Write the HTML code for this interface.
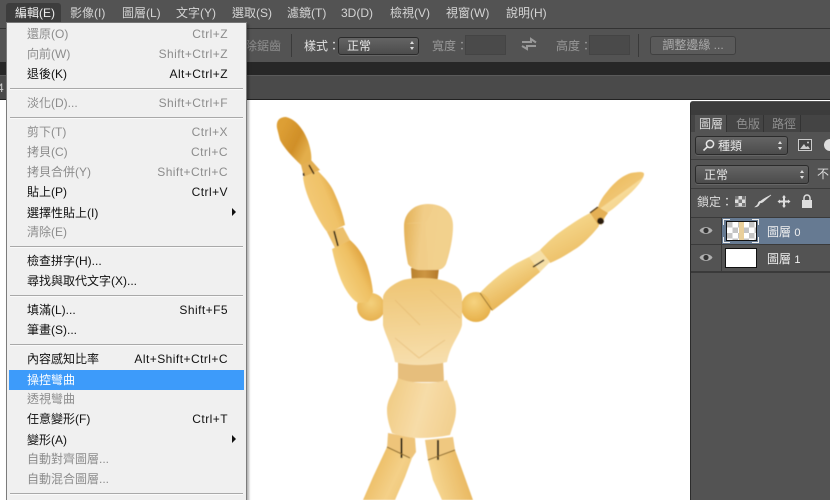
<!DOCTYPE html>
<html><head><meta charset="utf-8">
<style>
html,body{margin:0;padding:0;width:830px;height:500px;overflow:hidden;background:#fff}
body{position:relative;font:12px "Liberation Sans","Noto Sans CJK TC",sans-serif}
.a{position:absolute}
.t{position:absolute;white-space:nowrap;line-height:16px}
.bar{color:#d4d4d4}
.sep{position:absolute;left:10px;width:233px;background:#a9a9a9;border-bottom:1px solid #fafafa;box-sizing:border-box;height:2px}
.m{position:absolute;left:9px;width:235px;height:20px;line-height:20px;color:#111}
.m b{font-weight:normal;position:absolute;left:18px;top:0;white-space:nowrap}
.m i{font-style:normal;position:absolute;right:16px;top:0;white-space:nowrap;letter-spacing:.45px}
.d{color:#8c8c8c}
.arr{position:absolute;left:232px;width:0;height:0;border-left:4px solid #111;border-top:4px solid transparent;border-bottom:4px solid transparent}
.sel{position:absolute;box-sizing:border-box;border:1px solid #2b2b2b;border-radius:3px;background:linear-gradient(#646464,#4c4c4c);box-shadow:0 1px 0 #666;color:#e6e6e6;line-height:16px}
.ud{position:absolute;width:5px;height:9px}
.ud:before{content:"";position:absolute;left:0;top:0;border-left:2.5px solid transparent;border-right:2.5px solid transparent;border-bottom:3.5px solid #ddd}
.ud:after{content:"";position:absolute;left:0;bottom:0;border-left:2.5px solid transparent;border-right:2.5px solid transparent;border-top:3.5px solid #ddd}
</style></head><body>
<div class="a" style="left:0;top:0;width:830px;height:28px;background:#535353;border-bottom:1px solid #333"></div>
<div class="a" style="left:6px;top:3px;width:55px;height:20px;background:#3d3d3d;border-radius:3px 3px 0 0"></div>
<div class="bar">
<span class="t" style="left:15px;top:5px;color:#eee">編輯(E)</span>
<span class="t" style="left:70px;top:5px">影像(I)</span>
<span class="t" style="left:122px;top:5px">圖層(L)</span>
<span class="t" style="left:176px;top:5px">文字(Y)</span>
<span class="t" style="left:232px;top:5px">選取(S)</span>
<span class="t" style="left:287px;top:5px">濾鏡(T)</span>
<span class="t" style="left:341px;top:5px">3D(D)</span>
<span class="t" style="left:390px;top:5px">檢視(V)</span>
<span class="t" style="left:446px;top:5px">視窗(W)</span>
<span class="t" style="left:506px;top:5px">說明(H)</span>
</div>
<div class="a" style="left:0;top:29px;width:830px;height:33px;background:#535353"></div>
<div class="a" style="left:0;top:62px;width:830px;height:13px;background:#272727"></div>
<div class="a" style="left:0;top:75px;width:830px;height:24px;background:#4a4a4a;border-top:1px solid #5a5a5a;box-sizing:border-box"></div>
<div class="a" style="left:0;top:99px;width:830px;height:1px;background:#222"></div>
<span class="t" style="left:-3px;top:80px;color:#ccc">4</span>

<span class="t" style="left:245px;top:38px;color:#8d8d8d">除鋸齒</span>
<div class="a" style="left:291px;top:34px;width:1px;height:23px;background:#3a3a3a"></div>
<span class="t" style="left:304px;top:38px;color:#e2e2e2">樣式：</span>
<div class="sel" style="left:338px;top:37px;width:81px;height:18px"><span class="t" style="left:8px;top:0">正常</span><span class="ud" style="left:71px;top:3px"></span></div>
<span class="t" style="left:432px;top:38px;color:#999">寬度：</span>
<div class="a" style="left:465px;top:35px;width:41px;height:20px;background:#4a4a4a;border:1px solid #444;box-sizing:border-box"></div>
<svg class="a" style="left:521px;top:37px" width="16" height="15"><path d="M1 5h9V2l5 3.5M15 9H6v3L1 9" fill="none" stroke="#999" stroke-width="2"/></svg>
<span class="t" style="left:556px;top:38px;color:#999">高度：</span>
<div class="a" style="left:589px;top:35px;width:41px;height:20px;background:#4a4a4a;border:1px solid #444;box-sizing:border-box"></div>
<div class="a" style="left:638px;top:34px;width:1px;height:23px;background:#3a3a3a"></div>
<div class="a" style="left:650px;top:36px;width:86px;height:19px;box-sizing:border-box;border:1px solid #404040;border-radius:3px;background:#5a5a5a;color:#aaa;line-height:17px;text-align:center">調整邊緣 ...</div>

<svg class="a" style="left:250px;top:100px" width="440" height="400" viewBox="250 100 440 400">
<defs>
<filter id="b" x="-5%" y="-5%" width="110%" height="110%"><feGaussianBlur stdDeviation="0.45"/></filter>
<linearGradient id="h1" gradientUnits="userSpaceOnUse" x1="280" y1="130" x2="310" y2="145"><stop offset="0" stop-color="#dd9f35"/><stop offset=".6" stop-color="#d08f28"/><stop offset="1" stop-color="#e3ae4b"/></linearGradient>
<linearGradient id="a1" gradientUnits="userSpaceOnUse" x1="308" y1="205" x2="340" y2="192"><stop offset="0" stop-color="#f3c976"/><stop offset=".6" stop-color="#f0c268"/><stop offset="1" stop-color="#dfa540"/></linearGradient>
<linearGradient id="a2" gradientUnits="userSpaceOnUse" x1="338" y1="278" x2="368" y2="262"><stop offset="0" stop-color="#f5d180"/><stop offset=".6" stop-color="#efc063"/><stop offset="1" stop-color="#dfa23d"/></linearGradient>
<linearGradient id="hd" gradientUnits="userSpaceOnUse" x1="404" y1="235" x2="453" y2="240"><stop offset="0" stop-color="#e4b35a"/><stop offset=".35" stop-color="#f1cd88"/><stop offset="1" stop-color="#f3d08c"/></linearGradient>
<linearGradient id="ch" gradientUnits="userSpaceOnUse" x1="420" y1="280" x2="425" y2="365"><stop offset="0" stop-color="#efc676"/><stop offset=".5" stop-color="#f3d291"/><stop offset="1" stop-color="#f7dfae"/></linearGradient>
<linearGradient id="pv" gradientUnits="userSpaceOnUse" x1="387" y1="400" x2="455" y2="420"><stop offset="0" stop-color="#f1cc85"/><stop offset=".5" stop-color="#f7dca8"/><stop offset="1" stop-color="#f2cf8e"/></linearGradient>
<linearGradient id="ra" gradientUnits="userSpaceOnUse" x1="505" y1="268" x2="520" y2="295"><stop offset="0" stop-color="#f6d88f"/><stop offset="1" stop-color="#e8b658"/></linearGradient>
<linearGradient id="rf" gradientUnits="userSpaceOnUse" x1="560" y1="225" x2="575" y2="255"><stop offset="0" stop-color="#f5d68a"/><stop offset="1" stop-color="#edc068"/></linearGradient>
<linearGradient id="rh" gradientUnits="userSpaceOnUse" x1="615" y1="182" x2="628" y2="200"><stop offset="0" stop-color="#eebf65"/><stop offset=".55" stop-color="#f0c572"/><stop offset=".6" stop-color="#f7da98"/><stop offset="1" stop-color="#f6d68f"/></linearGradient>
<linearGradient id="lg" gradientUnits="userSpaceOnUse" x1="368" y1="470" x2="410" y2="490"><stop offset="0" stop-color="#ecbb60"/><stop offset=".6" stop-color="#f4d088"/><stop offset="1" stop-color="#efc575"/></linearGradient>
<linearGradient id="lh" gradientUnits="userSpaceOnUse" x1="435" y1="480" x2="470" y2="470"><stop offset="0" stop-color="#f5d48e"/><stop offset="1" stop-color="#e7b45a"/></linearGradient>
<linearGradient id="nk" gradientUnits="userSpaceOnUse" x1="411" y1="278" x2="438" y2="278"><stop offset="0" stop-color="#b8802c"/><stop offset=".5" stop-color="#cd9644"/><stop offset="1" stop-color="#b57a2a"/></linearGradient>
<radialGradient id="bl" gradientUnits="userSpaceOnUse" cx="371" cy="303" r="20"><stop offset="0" stop-color="#f4d07c"/><stop offset="1" stop-color="#e5ae4c"/></radialGradient>
<radialGradient id="br" gradientUnits="userSpaceOnUse" cx="474" cy="302" r="20"><stop offset="0" stop-color="#f6d380"/><stop offset="1" stop-color="#e6b04a"/></radialGradient>
</defs>
<g filter="url(#b)">
<!-- left arm -->
<path d="M277 128C276 120 280 117 286 117C295 119 303 128 308 141C311 150 312 157 311 163L306 170L301 165C296 160 285 150 280 140Z" fill="url(#h1)"/>
<path d="M301 165L311 160L320 170L304 177Z" fill="#e3af52"/>
<path d="M303 177L318 171C325 178 330 184 333 190C339 203 343 214 345 225L328 233C322 226 316 215 311 204C307 195 304 186 303 177Z" fill="url(#a1)"/>
<path d="M327 232L343 227L350 240L335 248Z" fill="#ecc06c"/>
<circle cx="371" cy="307" r="14" fill="url(#bl)"/>
<path d="M332 249L350 240C358 247 363 255 367 265C370 274 372 283 373 292L368 302L358 303C350 298 345 289 341 280C337 270 334 259 332 249Z" fill="url(#a2)"/>
<path d="M309 165L314 174M303.500 173L304 176" stroke="#2c1b0c" stroke-width="1.5" fill="none"/>
<path d="M334 231L338 246" stroke="#1f140a" stroke-width="1.6"/>
<!-- right arm -->
<path d="M598 207C601 198 606 193 610 188C617 180 624 175 631 173C637 172 644 171 644 174C644 179 636 189 624 199C618 205 612 210 607 213L601 226Z" fill="url(#rh)"/>
<path d="M590 213L598 207L608 213L598 226Z" fill="#e4b055"/>
<path d="M540 250C547 243 553 237 560 232C570 225 580 218 590 213L599 226C592 235 584 243 577 248C569 253 560 259 550 263Z" fill="url(#rf)"/>
<path d="M529 257L540 250L550 262L539 273Z" fill="#f6dfa6"/>
<path d="M480 293C490 282 505 270 517 263L529 257L540 272C528 282 512 296 492 311Z" fill="url(#ra)"/>
<path d="M533 267L544 260" stroke="#1f140a" stroke-width="1.4"/>
<path d="M590 213L598 207" stroke="#4a2e10" stroke-width="1.4"/>
<circle cx="600.500" cy="221" r="3.400" fill="#2c1b10"/>
<circle cx="476" cy="307" r="15" fill="url(#br)"/>
<path d="M480 293L492 310" stroke="#94702e" stroke-width="1"/>
<!-- neck and head -->
<path d="M411 268H439L437 284C430 287 418 287 412 284Z" fill="url(#nk)"/>
<path d="M428 204C413 204 404 214 404 226C404 240 406 254 408 264C412 269 416 270 420 270H436C441 270 444 268 446 264C449 255 453 240 453 226C453 212 443 204 428 204Z" fill="url(#hd)"/>
<path d="M405 224C412 222 420 222 425 223C429 218 432 212 433 205C444 208 451 215 453 226C449 240 447 255 445 266C438 269 428 270 428 270C428 255 426 240 425 223Z" fill="#f4d492" opacity=".35"/>
<!-- legs -->
<path d="M387 447L412 458L405 477L395 500H363L373 477Z" fill="url(#lg)"/>
<path d="M428 460L455 450L464 475L473 500H442L433 480Z" fill="url(#lh)"/>
<path d="M388 433L415 438L416 452L412 458L387 448Z" fill="#eec47a"/>
<path d="M425 440L453 437L455 450L428 460Z" fill="#efc880"/>
<path d="M401.500 438V458M438 440V460" stroke="#1f140a" stroke-width="2"/>
<path d="M387 447L410 458M428 460L455 450" stroke="#8c6a2a" stroke-width="1" fill="none"/>
<!-- waist and pelvis -->
<path d="M398 360H443L444 382H398Z" fill="#e6be7c"/>
<path d="M398 378C410 384 435 384 447 380C450 390 456 398 456 410C456 420 452 428 450 435C440 437 430 438 420 438C410 438 400 436 392 433C389 425 387 418 387 410C387 398 395 390 398 378Z" fill="url(#pv)"/>
<!-- chest -->
<path d="M403 280C415 277 438 277 450 283C458 286 462 291 462 298V325C460 335 450 345 447 362C430 366 410 366 395 362C392 345 385 335 383 325V298C383 292 392 284 403 280Z" fill="url(#ch)"/>
<path d="M395 338L419 358L445 340" stroke="#edc98a" stroke-width="1.200" fill="none"/>
<path d="M395 300L420 325M430 290L460 318" stroke="#e6bb72" stroke-width="1" fill="none" opacity=".7"/>
</g>
</svg>

<!-- menu -->
<div class="a" style="left:6px;top:22px;width:241px;height:478px;background:#f0f0f0;border-left:1px solid #7c7c7c;border-right:1px solid #7c7c7c;border-top:1px solid #777;box-sizing:border-box;box-shadow:2px 2px 2px rgba(0,0,0,.3)"></div>
<div class="m d" style="top:24px"><b>還原(O)</b><i>Ctrl+Z</i></div>
<div class="m d" style="top:44px"><b>向前(W)</b><i>Shift+Ctrl+Z</i></div>
<div class="m" style="top:64px"><b>退後(K)</b><i>Alt+Ctrl+Z</i></div>
<div class="sep" style="top:88px"></div>
<div class="m d" style="top:93px"><b>淡化(D)...</b><i>Shift+Ctrl+F</i></div>
<div class="sep" style="top:117px"></div>
<div class="m d" style="top:122px"><b>剪下(T)</b><i>Ctrl+X</i></div>
<div class="m d" style="top:142px"><b>拷貝(C)</b><i>Ctrl+C</i></div>
<div class="m d" style="top:162px"><b>拷貝合併(Y)</b><i>Shift+Ctrl+C</i></div>
<div class="m" style="top:182px"><b>貼上(P)</b><i>Ctrl+V</i></div>
<div class="m" style="top:203px"><b>選擇性貼上(I)</b></div><div class="arr" style="top:208px"></div>
<div class="m d" style="top:222px"><b>清除(E)</b></div>
<div class="sep" style="top:246px"></div>
<div class="m" style="top:251px"><b>檢查拼字(H)...</b></div>
<div class="m" style="top:271px"><b>尋找與取代文字(X)...</b></div>
<div class="sep" style="top:295px"></div>
<div class="m" style="top:300px"><b>填滿(L)...</b><i>Shift+F5</i></div>
<div class="m" style="top:320px"><b>筆畫(S)...</b></div>
<div class="sep" style="top:344px"></div>
<div class="m" style="top:349px"><b>內容感知比率</b><i>Alt+Shift+Ctrl+C</i></div>
<div class="m" style="top:370px;background:#3d9bfa;color:#fff"><b>操控彎曲</b></div>
<div class="m d" style="top:389px"><b>透視彎曲</b></div>
<div class="m" style="top:409px"><b>任意變形(F)</b><i>Ctrl+T</i></div>
<div class="m" style="top:430px"><b>變形(A)</b></div><div class="arr" style="top:435px"></div>
<div class="m d" style="top:449px"><b>自動對齊圖層...</b></div>
<div class="m d" style="top:469px"><b>自動混合圖層...</b></div>
<div class="sep" style="top:493px"></div>

<!-- panel -->
<div class="a" style="left:690px;top:101px;width:140px;height:399px;background:#535353;border-left:1px solid #2c2c2c;box-sizing:border-box;border-radius:3px 0 0 0"></div>
<div class="a" style="left:691px;top:102px;width:139px;height:13px;background:#3c3c3c"></div>
<div class="a" style="left:691px;top:115px;width:139px;height:17px;background:#444"></div>
<div class="a" style="left:695px;top:115px;width:31px;height:17px;background:#535353"></div>
<div class="a" style="left:726px;top:115px;width:1px;height:17px;background:#333"></div>
<div class="a" style="left:763px;top:115px;width:1px;height:17px;background:#333"></div>
<div class="a" style="left:800px;top:115px;width:1px;height:17px;background:#333"></div>
<span class="t" style="left:699px;top:116px;color:#ddd">圖層</span>
<span class="t" style="left:736px;top:116px;color:#8f8f8f">色版</span>
<span class="t" style="left:772px;top:116px;color:#8f8f8f">路徑</span>
<div class="sel" style="left:695px;top:136px;width:93px;height:19px"><span class="t" style="left:22px;top:1px">種類</span><span class="ud" style="left:82px;top:4px"></span>
<svg class="a" style="left:6px;top:2px" width="13" height="13"><circle cx="8" cy="5" r="3.600" fill="none" stroke="#e6e6e6" stroke-width="1.500"/><path d="M5.400 7.800L1.500 11.500" stroke="#e6e6e6" stroke-width="1.600"/></svg></div>
<svg class="a" style="left:798px;top:139px" width="14" height="12"><rect x=".5" y=".5" width="13" height="11" fill="#444" stroke="#ccc"/><path d="M2 10L6 5l2 3 2-1 2 3Z" fill="#ccc"/><circle cx="10" cy="3.500" r="1" fill="#ccc"/></svg>
<div class="a" style="left:824px;top:139px;width:12px;height:12px;border-radius:50%;background:linear-gradient(90deg,#ddd 50%,#555 50%)"></div>
<div class="a" style="left:691px;top:159px;width:139px;height:1px;background:#3c3c3c"></div>
<div class="sel" style="left:695px;top:165px;width:114px;height:19px"><span class="t" style="left:8px;top:1px">正常</span><span class="ud" style="left:104px;top:4px"></span></div>
<span class="t" style="left:817px;top:166px;color:#ddd">不</span>
<div class="a" style="left:691px;top:188px;width:139px;height:1px;background:#3c3c3c"></div>
<span class="t" style="left:697px;top:194px;color:#ddd">鎖定：</span>
<div class="a" style="left:735px;top:196px;width:11px;height:11px;background:conic-gradient(#ddd 25%,#777 0 50%,#ddd 0 75%,#777 0) 0 0/7px 7px"></div>
<svg class="a" style="left:754px;top:194px" width="18" height="15"><path d="M1 13C4 13 5 11 6 9C8 9 9 8 10 7L17 1C13 3 9 5 7 7C5 7 4 9 4 10C3 12 2 12 1 13Z" fill="#ddd" stroke="#ddd" stroke-width=".6"/></svg>
<svg class="a" style="left:777px;top:194px" width="14" height="15"><path d="M7 1L9 3.500H8V6.500H11V5.500L13.500 7.500L11 9.500V8.500H8V11.500H9L7 14L5 11.500H6V8.500H3V9.500L.5 7.500L3 5.500V6.500H6V3.500H5Z" fill="#ddd"/></svg>
<svg class="a" style="left:801px;top:194px" width="12" height="14"><rect x="1" y="6" width="10" height="8" fill="#ddd"/><path d="M3 6.500V4a3 3 0 0 1 6 0v2.500" fill="none" stroke="#ddd" stroke-width="1.500"/></svg>
<div class="a" style="left:691px;top:217px;width:139px;height:1px;background:#3a3a3a"></div>
<div class="a" style="left:722px;top:218px;width:108px;height:26px;background:#667a92"></div>
<div class="a" style="left:691px;top:244px;width:139px;height:1px;background:#3a3a3a"></div>
<div class="a" style="left:691px;top:271px;width:139px;height:2px;background:#3a3a3a"></div>
<div class="a" style="left:721px;top:218px;width:1px;height:54px;background:#3a3a3a"></div>
<svg class="a" style="left:699px;top:225px" width="14" height="11"><path d="M.5 5.500C3 1 11 1 13.500 5.500C11 10 3 10 .5 5.500Z" fill="#b0b0b0"/><circle cx="7" cy="5.500" r="2.600" fill="#333"/></svg>
<svg class="a" style="left:699px;top:252px" width="14" height="11"><path d="M.5 5.500C3 1 11 1 13.500 5.500C11 10 3 10 .5 5.500Z" fill="#b0b0b0"/><circle cx="7" cy="5.500" r="2.600" fill="#333"/></svg>
<div class="a" style="left:726px;top:221px;width:31px;height:20px;box-sizing:border-box;border:1px solid #111;background:conic-gradient(#fff 25%,#c4c4c4 0 50%,#fff 0 75%,#c4c4c4 0) 0 0/11px 11px"></div>
<svg class="a" style="left:723px;top:219px" width="36" height="24"><path d="M.5 6V.5H7M29 .5H35.500V6M35.500 18V23.500H29M7 23.500H.5V18" fill="none" stroke="#eee"/></svg>
<div class="a" style="left:739px;top:222px;width:5px;height:18px;background:#e9cf9a"></div>
<div class="a" style="left:725px;top:248px;width:32px;height:20px;box-sizing:border-box;border:1px solid #111;background:#fff"></div>
<span class="t" style="left:767px;top:224px;color:#f0f0f0">圖層 <span style="font-size:11px">0</span></span>
<span class="t" style="left:767px;top:251px;color:#f0f0f0">圖層 <span style="font-size:11px">1</span></span>
</body></html>
